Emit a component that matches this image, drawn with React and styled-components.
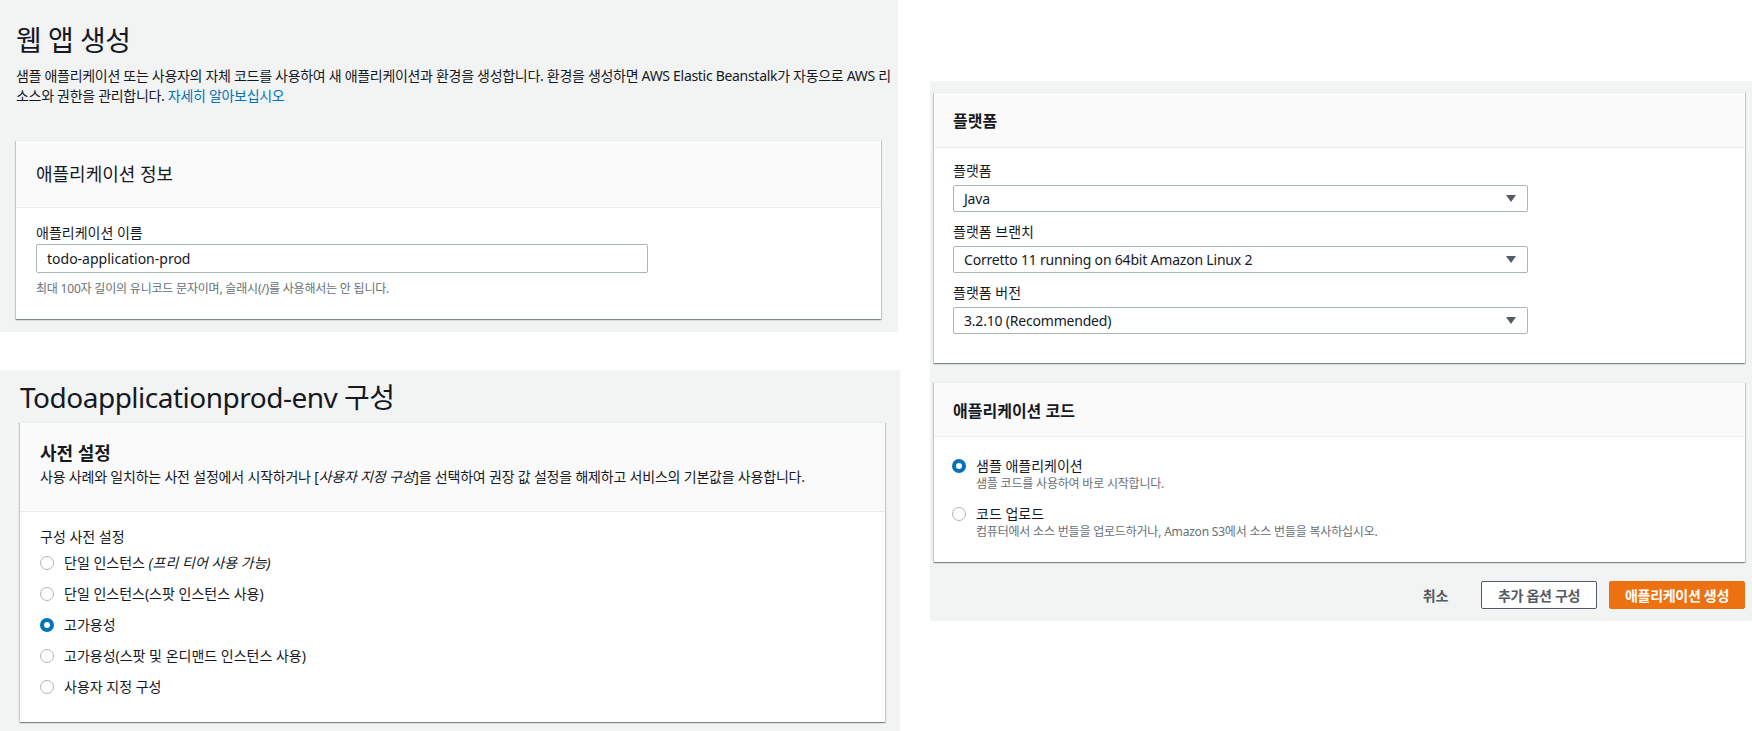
import React from 'react';
import styled, { createGlobalStyle } from 'styled-components';

const GlobalStyle = createGlobalStyle`
  body {
    margin: 0;
    background: #fff;
    font-family: "Noto Sans", "Noto Sans CJK KR", sans-serif;
    color: #16191f;
  }
`;

const Page = styled.div`
  display: flex;
  align-items: flex-start;
  width: 1752px;
  height: 731px;
  overflow: hidden;
`;

const LeftCol = styled.div`
  display: flex;
  flex-direction: column;
  gap: 38px;
  width: 900px;
`;

const Shot = styled.section`
  box-sizing: border-box;
  display: flex;
  flex-direction: column;
  align-items: flex-start;
  background: #f2f3f3;
  width: ${p => p.$w}px;
  height: ${p => p.$h}px;
  padding: ${p => p.$pad};
  margin: ${p => p.$margin || 0};
`;

const PageTitle = styled.h1`
  margin: 0;
  font-size: 28px;
  line-height: 36px;
  font-weight: 400;
  letter-spacing: -0.5px;
`;

const Intro = styled.p`
  margin: 8px 0 0;
  font-size: 14px;
  line-height: 20px;
  letter-spacing: -0.3px;

  span {
    display: block;
    white-space: nowrap;
  }

  a {
    color: #0073bb;
    text-decoration: none;
  }
`;

const Card = styled.div`
  box-sizing: border-box;
  width: ${p => p.$w}px;
  margin-top: ${p => p.$top || 0}px;
  background: #fff;
  border-top: 1px solid #eaeded;
  box-shadow: 0 1px 1px 0 rgba(0, 28, 36, 0.3), 1px 1px 1px 0 rgba(0, 28, 36, 0.15),
    -1px 1px 1px 0 rgba(0, 28, 36, 0.15);
`;

const CardHeader = styled.div`
  background: #fafafa;
  border-bottom: 1px solid #eaeded;
  padding: ${p => p.$pad};
`;

const CardTitle = styled.h2`
  margin: 0;
  font-size: ${p => p.$size || 18}px;
  line-height: ${p => (p.$size === 16 ? 22 : 24)}px;
  font-weight: ${p => (p.$bold ? 700 : 400)};
`;

const CardDesc = styled.p`
  margin: 2px 0 0;
  font-size: 14px;
  line-height: 20px;
  letter-spacing: -0.2px;
  white-space: nowrap;
`;

const CardBody = styled.div`
  padding: ${p => p.$pad};
  display: flex;
  flex-direction: column;
  gap: ${p => p.$gap || 0}px;
`;

const Field = styled.div`
  display: flex;
  flex-direction: column;
  gap: 4px;
`;

const Label = styled.div`
  font-size: 14px;
  line-height: 20px;
`;

const TextBox = styled.div`
  box-sizing: border-box;
  width: ${p => p.$w}px;
  height: 29px;
  margin-top: 1px;
  padding: 0 10px;
  border: 1px solid #aab7b8;
  border-radius: 2px;
  font-size: 14px;
  line-height: 27px;
`;

const Hint = styled.div`
  margin-top: 8px;
  font-size: 12px;
  line-height: 16px;
  color: #687078;
  letter-spacing: -0.2px;
`;

const Select = styled.div`
  box-sizing: border-box;
  display: flex;
  align-items: center;
  justify-content: space-between;
  width: 575px;
  height: 27px;
  padding: 0 11px 0 10px;
  border: 1px solid #aab7b8;
  border-radius: 2px;
  font-size: 14px;
  letter-spacing: -0.2px;
`;

const Caret = styled.span`
  width: 0;
  height: 0;
  border-left: 5px solid transparent;
  border-right: 5px solid transparent;
  border-top: 7px solid #545b64;
`;

const RadioRow = styled.label`
  display: flex;
  align-items: ${p => (p.$top ? 'flex-start' : 'center')};
  gap: 10px;
  height: ${p => (p.$top ? 'auto' : '31px')};
  font-size: 14px;
  line-height: 20px;

  em {
    font-style: italic;
  }
`;

const Dot = styled.span`
  box-sizing: border-box;
  flex: none;
  width: 14px;
  height: 14px;
  margin-top: ${p => (p.$top ? 3 : 0)}px;
  border-radius: 50%;
  background: #fff;
  border: ${p => (p.$on ? '4px solid #0073bb' : '1px solid #aab7b8')};
`;

const OptionText = styled.div`
  display: flex;
  flex-direction: column;
`;

const OptionDesc = styled.span`
  font-size: 12px;
  line-height: 16px;
  color: #687078;
  letter-spacing: -0.2px;
`;

const Actions = styled.div`
  display: flex;
  justify-content: flex-end;
  align-items: center;
  gap: 12px;
  width: 811px;
  margin-top: 19px;
`;

const Button = styled.button`
  box-sizing: border-box;
  width: ${p => (p.$w ? `${p.$w}px` : 'auto')};
  height: 28px;
  padding: 0 ${p => (p.$kind === 'link' ? 20 : 4)}px;
  border-radius: 2px;
  font-family: inherit;
  font-size: 14px;
  font-weight: 700;
  letter-spacing: -0.3px;
  white-space: nowrap;
  cursor: pointer;
  color: ${p => (p.$kind === 'primary' ? '#fff' : '#545b64')};
  background: ${p => (p.$kind === 'primary' ? '#ec7211' : p.$kind === 'link' ? 'transparent' : '#fff')};
  border: 1px solid
    ${p => (p.$kind === 'primary' ? '#ec7211' : p.$kind === 'link' ? 'transparent' : '#545b64')};
`;

const presets = [
  { label: '단일 인스턴스 ', note: '(프리 티어 사용 가능)' },
  { label: '단일 인스턴스(스팟 인스턴스 사용)' },
  { label: '고가용성', on: true },
  { label: '고가용성(스팟 및 온디맨드 인스턴스 사용)' },
  { label: '사용자 지정 구성' },
];

const platformFields = [
  { label: '플랫폼', value: 'Java' },
  { label: '플랫폼 브랜치', value: 'Corretto 11 running on 64bit Amazon Linux 2' },
  { label: '플랫폼 버전', value: '3.2.10 (Recommended)' },
];

const codeOptions = [
  { label: '샘플 애플리케이션', desc: '샘플 코드를 사용하여 바로 시작합니다.', on: true },
  { label: '코드 업로드', desc: '컴퓨터에서 소스 번들을 업로드하거나, Amazon S3에서 소스 번들을 복사하십시오.' },
];

export default function App() {
  return (
    <>
      <GlobalStyle />
      <Page>
        <LeftCol>
          <Shot $w={898} $h={332} $pad="22px 0 0 16px">
            <PageTitle>웹 앱 생성</PageTitle>
            <Intro>
              <span>
                샘플 애플리케이션 또는 사용자의 자체 코드를 사용하여 새 애플리케이션과 환경을 생성합니다. 환경을 생성하면 AWS Elastic Beanstalk가 자동으로 AWS 리
              </span>
              <span>
                소스와 권한을 관리합니다. <a href="#">자세히 알아보십시오</a>
              </span>
            </Intro>
            <Card $w={865} $top={34}>
              <CardHeader $pad="21px 20px 21px">
                <CardTitle>애플리케이션 정보</CardTitle>
              </CardHeader>
              <CardBody $pad="15px 20px 22px">
                <Label>애플리케이션 이름</Label>
                <TextBox $w={612}>todo-application-prod</TextBox>
                <Hint>최대 100자 길이의 유니코드 문자이며, 슬래시(/)를 사용해서는 안 됩니다.</Hint>
              </CardBody>
            </Card>
          </Shot>

          <Shot $w={900} $h={361} $pad="9px 0 0 20px">
            <PageTitle>Todoapplicationprod-env 구성</PageTitle>
            <Card $w={865} $top={7}>
              <CardHeader $pad="18px 20px 24px">
                <CardTitle $bold>사전 설정</CardTitle>
                <CardDesc>
                  사용 사례와 일치하는 사전 설정에서 시작하거나 [<em>사용자 지정 구성</em>]을 선택하여 권장 값 설정을 해제하고 서비스의 기본값을 사용합니다.
                </CardDesc>
              </CardHeader>
              <CardBody $pad="15px 20px 20px">
                <Label>구성 사전 설정</Label>
                {presets.map(p => (
                  <RadioRow key={p.label + (p.note || '')}>
                    <Dot $on={p.on} />
                    <span>
                      {p.label}
                      {p.note && <em>{p.note}</em>}
                    </span>
                  </RadioRow>
                ))}
              </CardBody>
            </Card>
          </Shot>
        </LeftCol>

        <Shot $w={822} $h={540} $pad="11px 0 0 4px" $margin="81px 0 0 30px">
          <Card $w={811}>
            <CardHeader $pad="17px 19px 15px">
              <CardTitle $bold $size={16}>플랫폼</CardTitle>
            </CardHeader>
            <CardBody $pad="13px 19px 29px" $gap={10}>
              {platformFields.map(f => (
                <Field key={f.label}>
                  <Label>{f.label}</Label>
                  <Select>
                    <span>{f.value}</span>
                    <Caret />
                  </Select>
                </Field>
              ))}
            </CardBody>
          </Card>

          <Card $w={811} $top={19}>
            <CardHeader $pad="17px 19px 14px">
              <CardTitle $bold $size={16}>애플리케이션 코드</CardTitle>
            </CardHeader>
            <CardBody $pad="19px 18px 22px" $gap={12}>
              {codeOptions.map(o => (
                <RadioRow key={o.label} $top>
                  <Dot $on={o.on} $top />
                  <OptionText>
                    <span>{o.label}</span>
                    <OptionDesc>{o.desc}</OptionDesc>
                  </OptionText>
                </RadioRow>
              ))}
            </CardBody>
          </Card>

          <Actions>
            <Button $kind="link">취소</Button>
            <Button $w={116}>추가 옵션 구성</Button>
            <Button $kind="primary" $w={136}>애플리케이션 생성</Button>
          </Actions>
        </Shot>
      </Page>
    </>
  );
}
